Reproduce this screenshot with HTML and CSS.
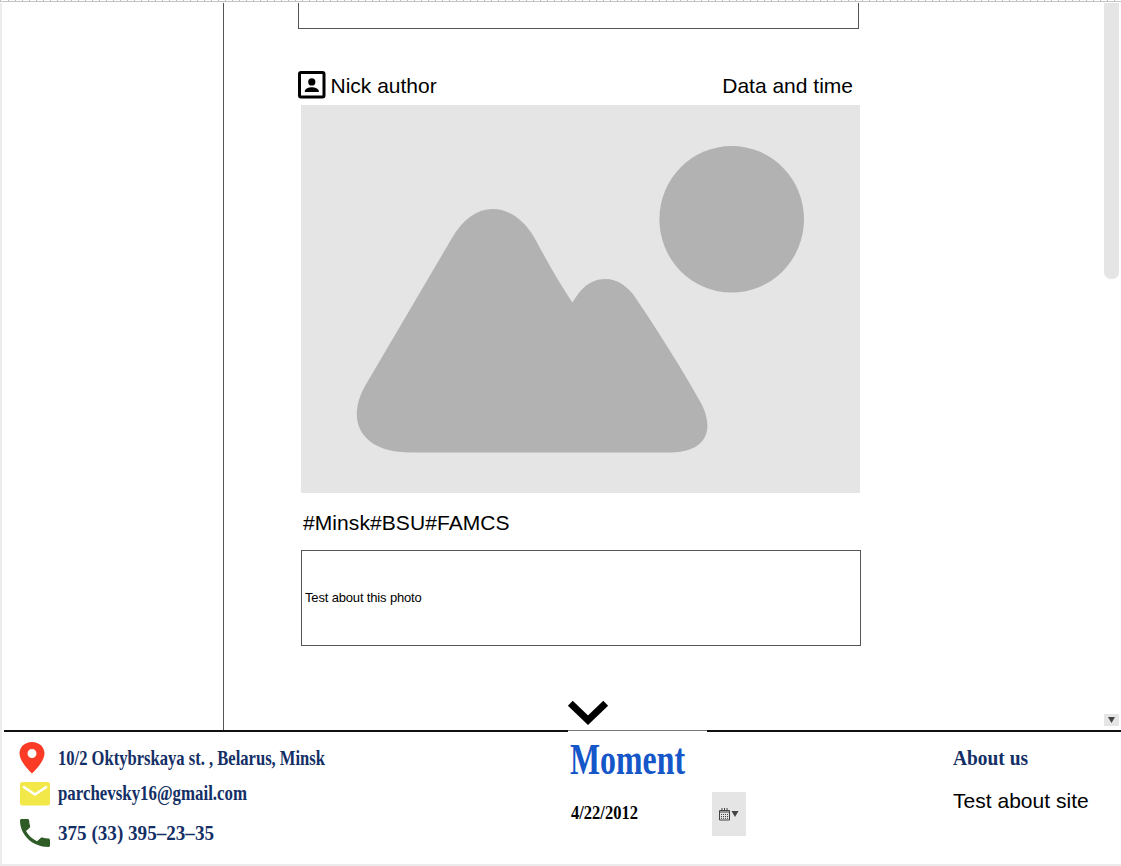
FILE: index.html
```html
<!DOCTYPE html>
<html lang="en">
<head>
<meta charset="utf-8">
<title>Moment</title>
<link rel="stylesheet" href="styles.css">
</head>
<body>
<div class="page">
  <div class="ruler"></div>
  <main class="main">
    <aside class="sidebar"></aside>
    <section class="feed">
      <div class="previous"></div>
      <article class="post">
        <header class="post-head">
          <svg class="avatar" viewBox="0 0 28 28"><rect x="1.500" y="1.500" width="24.500" height="24.500" rx="1.500" fill="none" stroke="#000" stroke-width="3"/><circle cx="13.800" cy="10.900" r="3.600"/><path d="M6.800 21v-1c0-2.400 4.300-3.800 7-3.800s7 1.400 7 3.800v1z"/></svg>
          <span class="nick">Nick author</span>
          <span class="date">Data and time</span>
        </header>
        <svg class="photo" viewBox="301 105 559 388">
          <ellipse cx="731.700" cy="219.300" rx="72.300" ry="73.300"/>
          <path d="M452 238C463 219 477 209 493 209C509 209 524 220 534 237C545 257 556 278 572.500 302.500C580 290 589 279 605.500 279C618 279 628 287 635 297C658 331 684 372 702 405C716 434 702 452.500 671 452.500H411C362 452.500 345 422 365 386Z"/>
        </svg>
        <div class="tags">#Minsk#BSU#FAMCS</div>
        <div class="description">Test about this photo</div>
      </article>
      <svg class="chevron" viewBox="0 0 40 24"><path d="M2.300 2.300 20 19.200 37.700 2.300" fill="none" stroke="#000" stroke-width="7"/></svg>
    </section>
    <div class="scrollbar">
      <div class="thumb"></div>
      <div class="scroll-down"><svg viewBox="0 0 15 12"><path d="M4 3h7L7.500 9z" fill="#444"/></svg></div>
    </div>
  </main>
  <footer class="footer">
    <div class="contacts">
      <div class="contact address">
        <svg class="pin" viewBox="0 0 26 32"><path fill="#fb3b26" fill-rule="evenodd" d="M13 0C5.700 0 .5 5 .5 11.500C.5 20 13 31.500 13 31.500S25.500 20 25.500 11.500C25.500 5 20.300 0 13 0zM13 7a4.500 4.500 0 1 1 0 9 4.500 4.500 0 0 1 0-9z"/></svg>
        <svg class="label" width="290" height="32"><text x="0" y="22.500" textLength="267" lengthAdjust="spacingAndGlyphs">10/2 Oktybrskaya st. , Belarus, Minsk</text></svg>
      </div>
      <div class="contact mail">
        <svg class="envelope" viewBox="0 0 30 24"><rect width="30" height="23.500" rx="2.500" fill="#f2e84a"/><path d="M3 4.500 15 12.500 27 4.500" fill="none" stroke="#fff" stroke-width="2.500"/></svg>
        <svg class="label" width="290" height="32"><text x="0" y="23" textLength="189" lengthAdjust="spacingAndGlyphs">parchevsky16@gmail.com</text></svg>
      </div>
      <div class="contact phone">
        <svg class="handset" viewBox="3 3 18 18" preserveAspectRatio="none"><path fill="#2f5b26" d="M6.620 10.790c1.440 2.830 3.760 5.140 6.590 6.590l2.200-2.200c.27-.27.670-.36 1.020-.24 1.120.37 2.330.57 3.570.57.550 0 1 .45 1 1V20c0 .55-.45 1-1 1-9.390 0-17-7.610-17-17 0-.55.450-1 1-1h3.500c.55 0 1 .45 1 1 0 1.250.2 2.450.57 3.570.11.350.030.740-.25 1.020l-2.200 2.200z"/></svg>
        <svg class="label" width="290" height="32"><text x="0" y="23" textLength="156" lengthAdjust="spacingAndGlyphs">375 (33) 395–23–35</text></svg>
      </div>
    </div>
    <div class="brand">
      <svg class="logo" width="150" height="50"><text x="0" y="42" textLength="115" lengthAdjust="spacingAndGlyphs">Moment</text></svg>
      <div class="date-row">
        <svg class="today" width="80" height="26"><text x="0" y="18" textLength="67" lengthAdjust="spacingAndGlyphs">4/22/2012</text></svg>
        <div class="picker"><svg viewBox="0 0 20 13"><path d="M.5 2.500h10v9.500H.5zM.5 4h10M3 0v3M5.500 0v3M8 0v3" fill="none" stroke="#444"/><path d="M2 6.500h7M2 8.500h7M2 10.300h7" stroke="#444" stroke-dasharray="1 1"/><path d="M12.500 3h7L16 9z" fill="#444"/></svg></div>
      </div>
    </div>
    <div class="about">
      <svg class="label" width="110" height="30"><text x="0" y="22" textLength="75" lengthAdjust="spacingAndGlyphs">About us</text></svg>
      <div class="about-text">Test about site</div>
    </div>
  </footer>
</div>
</body>
</html>
```
FILE: styles.css
```css
* { box-sizing: border-box; }
body { margin: 0; background: #fff; color: #000; font-family: "Liberation Sans", Arial, sans-serif; }
svg { display: block; flex: none; overflow: visible; }
.page { width: 1121px; height: 866px; display: grid; grid-template-rows: 3px 727px 136px; overflow: hidden; background: linear-gradient(#ececec, #ececec) 0 3px / 2px 100% no-repeat; border-bottom: 2px solid #ebebeb; }
.ruler { height: 2px; border-bottom: 1px solid #c4c4c4; background: repeating-linear-gradient(90deg, transparent 0 6px, #bbb 6px 7px) 2px 0; }
.main { display: grid; grid-template-columns: 224px 1fr 17px; }
.sidebar { border-right: 1px solid #555; }
.feed { padding-left: 74px; display: flex; flex-direction: column; align-items: flex-start; }
.previous { width: 560.500px; height: 26px; border: 1px solid #555; border-top: 0; }
.post { margin-top: 42px; width: 563px; }
.post-head { display: flex; align-items: center; height: 28px; font-size: 21px; line-height: 28px; }
.avatar { width: 28px; height: 28px; }
.nick { margin: 2px 0 0 4.500px; }
.date { margin: 2px 8px 0 auto; }
.photo { margin: 6px 0 0 3px; width: 559px; height: 388px; background: #e5e5e5; fill: #b2b2b2; }
.tags { margin: 16px 0 0 5px; height: 28px; line-height: 28px; font-size: 21px; letter-spacing: .08px; }
.description { margin: 13px 0 0 3px; width: 560px; height: 96px; border: 1px solid #555; padding: 0 0 1px 3px; display: flex; align-items: center; font-size: 13px; letter-spacing: -.16px; }
.chevron { width: 40px; height: 24px; margin: 55px 0 0 270px; }
.scrollbar { display: flex; flex-direction: column; justify-content: space-between; padding-bottom: 4px; }
.thumb { width: 15px; height: 276px; background: #e5e5e5; border-radius: 0 0 7px 7px; }
.scroll-down { width: 15px; height: 12px; background: #e5e5e5; }
.footer { margin-left: 4px; border-top: 2px solid #111; display: grid; grid-template-columns: 566px 383px 1fr; }
.label { font: bold 22px "Liberation Serif", serif; fill: #142f66; }
.contacts { padding: 8px 0 0 15px; }
.contact { display: grid; grid-template-columns: 39px 1fr; align-items: center; }
.address { height: 36px; }
.mail { height: 34px; }
.phone { height: 42px; margin-top: 2px; }
.pin { width: 26px; height: 32px; }
.envelope { width: 30px; height: 24px; margin: 2px 0 0 1px; }
.handset { width: 30px; height: 28px; margin-left: 1px; }
.brand { margin-top: -2px; }
.brand::before { content: ""; display: block; width: 139px; margin-left: -2px; height: 2px; background: linear-gradient(#777 0 1px, #fff 1px); }
.logo { height: 50px; font: bold 44px "Liberation Serif", serif; fill: #1556c8; }
.date-row { display: flex; align-items: center; margin: 10px 0 0 1px; height: 44px; }
.today { font: bold 18px "Liberation Serif", serif; }
.picker { width: 34px; height: 44px; margin-left: 61px; display: grid; place-items: center; background: #e5e5e5; }
.picker svg { width: 20px; height: 13px; }
.about { padding-top: 11px; }
.about-text { margin-top: 14px; line-height: 28px; font-size: 21px; letter-spacing: .02px; }
```
